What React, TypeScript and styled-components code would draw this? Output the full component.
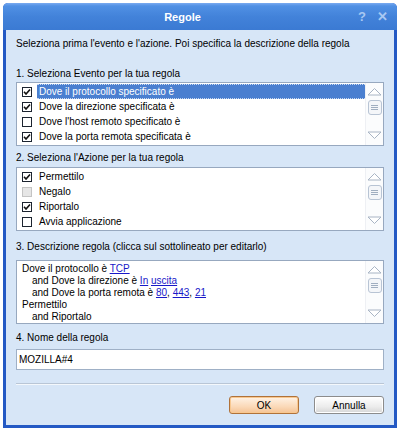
import React from "react";
import styled, { createGlobalStyle } from "styled-components";

const Global = createGlobalStyle`
  html, body { margin: 0; padding: 0; background: #ffffff; }
  body { font-family: "Liberation Sans", Arial, sans-serif; font-size: 10px; color: #000; }
  * { box-sizing: border-box; }
`;

const Page = styled.div`
  width: 400px;
  height: 432px;
  padding: 3px 3px 4px 3px;
`;

const Window = styled.div`
  width: 394px;
  height: 425px;
  display: flex;
  flex-direction: column;
  border-radius: 5px 5px 0 0;
  overflow: hidden;
  background: #2459c4;
`;

const TitleBar = styled.div`
  height: 27px;
  flex: none;
  display: flex;
  align-items: center;
  background: linear-gradient(#7aaaf0 0px, #5090e4 3px, #4282d9 14px, #3b7ad3 100%);
`;

const Title = styled.div`
  flex: 1;
  text-align: center;
  color: #fff;
  font-weight: bold;
  font-size: 11px;
  padding-left: 4px;
`;

const TitleButtons = styled.div`
  display: flex;
  gap: 11px;
  padding-right: 9px;
  color: #a8c8f2;
  font-size: 13px;
  font-weight: bold;
  align-items: center;
`;

const Body = styled.div`
  flex: 1;
  margin: 0 3px 3px 3px;
  background: #d7e6f7;
  padding: 8px 10px 0 10px;
  display: flex;
  flex-direction: column;
`;

const Label = styled.div<{ $mt: number; $mb: number }>`
  line-height: 12px;
  height: 12px;
  margin-top: ${(p) => p.$mt}px;
  margin-bottom: ${(p) => p.$mb}px;
  white-space: nowrap;
`;

const ListBox = styled.div<{ $h: number }>`
  height: ${(p) => p.$h}px;
  background: #fff;
  border: 1px solid #97a8bf;
  display: flex;
  overflow: hidden;
`;

const ListItems = styled.div`
  flex: 1;
  padding-top: 1px;
  display: flex;
  flex-direction: column;
`;

const Row = styled.div`
  height: 15px;
  display: flex;
  align-items: center;
  padding-left: 5px;
  gap: 5px;
  white-space: nowrap;
`;

const ItemText = styled.div<{ $sel?: boolean }>`
  flex: 1;
  height: 15px;
  display: flex;
  align-items: center;
  padding-left: 2px;
  background: ${(p) => (p.$sel ? "#4a7fd0" : "transparent")};
  color: ${(p) => (p.$sel ? "#fff" : "#000")};
  border-top: 1px dotted ${(p) => (p.$sel ? "#c8d8f0" : "transparent")};
  border-bottom: 1px dotted ${(p) => (p.$sel ? "#c8d8f0" : "transparent")};
`;

const Box = styled.div<{ $disabled?: boolean }>`
  width: 10px;
  height: 10px;
  flex: none;
  border: 1px solid ${(p) => (p.$disabled ? "#c4c4c4" : "#1c2430")};
  background: ${(p) => (p.$disabled ? "#e6e6e6" : "#fff")};
  display: flex;
  align-items: center;
  justify-content: center;
`;

const Scroll = styled.div`
  width: 18px;
  flex: none;
  border-left: 1px solid #eef0f4;
  background: #fbfcfd;
  display: flex;
  flex-direction: column;
  align-items: center;
  padding: 4px 0 5px 0;
`;

const Thumb = styled.div`
  width: 14px;
  height: 15px;
  margin-top: 4px;
  border: 1px solid #b8c4d4;
  border-radius: 3px;
  background: #f4f6f9;
  display: flex;
  align-items: center;
  justify-content: center;
`;

const Spacer = styled.div`
  flex: 1;
`;

const DescText = styled.div`
  flex: 1;
  padding: 2px 0 0 5px;
  line-height: 12px;
  white-space: nowrap;
`;

const Indent = styled.div`
  padding-left: 10px;
`;

const Link = styled.span`
  color: #1818c8;
  text-decoration: underline;
`;

const Input = styled.div`
  height: 21px;
  background: #fff;
  border: 1px solid #9fb0c6;
  display: flex;
  align-items: center;
  padding-left: 2px;
`;

const Separator = styled.div`
  height: 2px;
  margin-top: 13px;
  border-top: 1px solid #b9c6d6;
  border-bottom: 1px solid #f4f8fc;
`;

const ButtonRow = styled.div`
  display: flex;
  justify-content: flex-end;
  gap: 15px;
  margin-top: 11px;
`;

const Button = styled.div<{ $primary?: boolean }>`
  width: 70px;
  height: 18px;
  display: flex;
  align-items: center;
  justify-content: center;
  border-radius: 3px;
  border: 1px solid ${(p) => (p.$primary ? "#b0723a" : "#8c8c8c")};
  background: ${(p) =>
    p.$primary
      ? "linear-gradient(#fff3e6, #fbd9b8 60%, #f4c394)"
      : "linear-gradient(#ffffff, #ececec 60%, #d6d6d6)"};
  box-shadow: ${(p) =>
    p.$primary ? "inset 0 0 0 1px #f8c890" : "inset 0 0 0 1px #ffffff"};
`;

const Check = () => (
  <svg width="8" height="8" viewBox="0 0 8 8">
    <path d="M1 3.8 L3 6 L7 1.5" fill="none" stroke="#111" strokeWidth="1.6" />
  </svg>
);

const Up = () => (
  <svg width="15" height="9" viewBox="0 0 15 9">
    <path d="M1 8 L7.5 1.5 L14 8 Z" fill="#fff" stroke="#a8b4c4" strokeWidth="1" />
  </svg>
);

const Down = () => (
  <svg width="15" height="9" viewBox="0 0 15 9">
    <path d="M1 1 L7.5 7.5 L14 1 Z" fill="#fff" stroke="#a8b4c4" strokeWidth="1" />
  </svg>
);

const Grip = () => (
  <svg width="7" height="6" viewBox="0 0 7 6">
    <path d="M0 0.5 H7 M0 2.5 H7 M0 4.5 H7" stroke="#a0aec0" strokeWidth="1" />
  </svg>
);

const ScrollBar = () => (
  <Scroll>
    <Up />
    <Thumb>
      <Grip />
    </Thumb>
    <Spacer />
    <Down />
  </Scroll>
);

type Item = { text: string; checked: boolean; sel?: boolean; disabled?: boolean };

const events: Item[] = [
  { text: "Dove il protocollo specificato è", checked: true, sel: true },
  { text: "Dove la direzione specificata è", checked: true },
  { text: "Dove l'host remoto specificato è", checked: false },
  { text: "Dove la porta remota specificata è", checked: true },
];

const actions: Item[] = [
  { text: "Permettilo", checked: true },
  { text: "Negalo", checked: false, disabled: true },
  { text: "Riportalo", checked: true },
  { text: "Avvia applicazione", checked: false },
];

const CheckList = ({ items }: { items: Item[] }) => (
  <ListBox $h={64}>
    <ListItems>
      {items.map((it) => (
        <Row key={it.text}>
          <Box $disabled={it.disabled}>{it.checked && <Check />}</Box>
          <ItemText $sel={it.sel}>{it.text}</ItemText>
        </Row>
      ))}
    </ListItems>
    <ScrollBar />
  </ListBox>
);

export default function App() {
  return (
    <Page>
      <Global />
      <Window>
        <TitleBar>
          <Title>Regole</Title>
          <TitleButtons>
            <span>?</span>
            <span>✕</span>
          </TitleButtons>
        </TitleBar>
        <Body>
          <Label $mt={0} $mb={0}>
            Seleziona prima l'evento e l'azione. Poi specifica la descrizione della regola
          </Label>
          <Label $mt={18} $mb={2}>
            1. Seleziona Evento per la tua regola
          </Label>
          <CheckList items={events} />
          <Label $mt={6} $mb={3}>
            2. Seleziona l'Azione per la tua regola
          </Label>
          <CheckList items={actions} />
          <Label $mt={10} $mb={7}>
            3. Descrizione regola (clicca sul sottolineato per editarlo)
          </Label>
          <ListBox $h={64}>
            <DescText>
              <div>
                Dove il protocollo è <Link>TCP</Link>
              </div>
              <Indent>
                and Dove la direzione è <Link>In</Link> <Link>uscita</Link>
              </Indent>
              <Indent>
                and Dove la porta remota è <Link>80</Link>, <Link>443</Link>, <Link>21</Link>
              </Indent>
              <div>Permettilo</div>
              <Indent>and Riportalo</Indent>
            </DescText>
            <ScrollBar />
          </ListBox>
          <Label $mt={8} $mb={5}>
            4. Nome della regola
          </Label>
          <Input>MOZILLA#4</Input>
          <Separator />
          <ButtonRow>
            <Button $primary>OK</Button>
            <Button>Annulla</Button>
          </ButtonRow>
        </Body>
      </Window>
    </Page>
  );
}
